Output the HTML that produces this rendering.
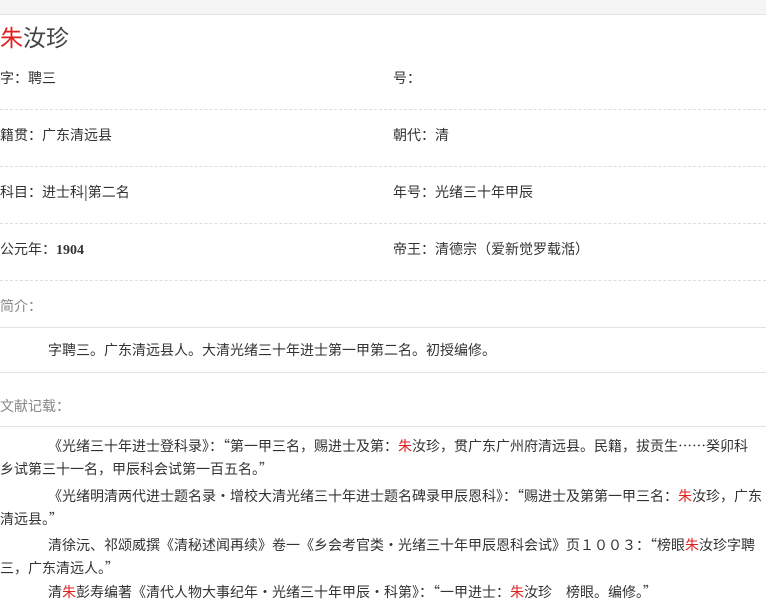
<!DOCTYPE html>
<html><head><meta charset="utf-8"><style>
body{margin:0;width:766px;height:614px;overflow:hidden;background:#fff;font-family:"Noto Sans CJK SC","Liberation Sans",sans-serif;color:#333;font-size:14px}
.top{height:14px;background:#f5f5f5;border-bottom:1px solid #e5e5e5}
.title{position:absolute;left:0;top:21px;font-size:23px;color:#444;line-height:30px}
.r{color:#e02020}
.f{position:absolute;font-size:14px;line-height:20px;white-space:nowrap}
.dl{position:absolute;left:0;width:766px;border-top:1px dashed #ddd;height:0}
.sl{position:absolute;left:0;width:766px;border-top:1px solid #e3e3e3;height:0}
.g{color:#888}
.p{position:absolute;left:0;white-space:nowrap;line-height:20px}
</style></head><body>
<div class="top"></div>
<div class="title"><span class="r">朱</span>汝珍</div>
<div class="f" style="left:0;top:68px">字：聘三</div>
<div class="f" style="left:393px;top:68px">号：</div>
<div class="dl" style="top:109px"></div>
<div class="f" style="left:0;top:125px">籍贯：广东清远县</div>
<div class="f" style="left:393px;top:125px">朝代：清</div>
<div class="dl" style="top:166px"></div>
<div class="f" style="left:0;top:182px">科目：进士科|第二名</div>
<div class="f" style="left:393px;top:182px">年号：光绪三十年甲辰</div>
<div class="dl" style="top:223px"></div>
<div class="f" style="left:0;top:239px">公元年：<b style="font-family:'Liberation Serif',serif">1904</b></div>
<div class="f" style="left:393px;top:239px">帝王：清德宗（爱新觉罗载湉）</div>
<div class="dl" style="top:280px"></div>
<div class="f g" style="left:0;top:296px">简介：</div>
<div class="sl" style="top:327px"></div>
<div class="p" style="left:48px;top:340px">字聘三。广东清远县人。大清光绪三十年进士第一甲第二名。初授编修。</div>
<div class="sl" style="top:372px"></div>
<div class="f g" style="left:0;top:396px">文献记载：</div>
<div class="sl" style="top:426px"></div>
<div class="p" style="left:48px;top:436px">《光绪三十年进士登科录》：“第一甲三名，赐进士及第：<span class="r">朱</span>汝珍，贯广东广州府清远县。民籍，拔贡生……癸卯科</div>
<div class="p" style="top:459px">乡试第三十一名，甲辰科会试第一百五名。”</div>
<div class="p" style="left:48px;top:486px">《光绪明清两代进士题名录·增校大清光绪三十年进士题名碑录甲辰恩科》：“赐进士及第第一甲三名：<span class="r">朱</span>汝珍，广东</div>
<div class="p" style="top:509px">清远县。”</div>
<div class="p" style="left:48px;top:535px">清徐沅、祁颂威撰《清秘述闻再续》卷一《乡会考官类·光绪三十年甲辰恩科会试》页１００３：“榜眼<span class="r">朱</span>汝珍字聘</div>
<div class="p" style="top:558px">三，广东清远人。”</div>
<div class="p" style="left:48px;top:582px">清<span class="r">朱</span>彭寿编著《清代人物大事纪年·光绪三十年甲辰·科第》：“一甲进士：<span class="r">朱</span>汝珍　榜眼。编修。”</div>
</body></html>
